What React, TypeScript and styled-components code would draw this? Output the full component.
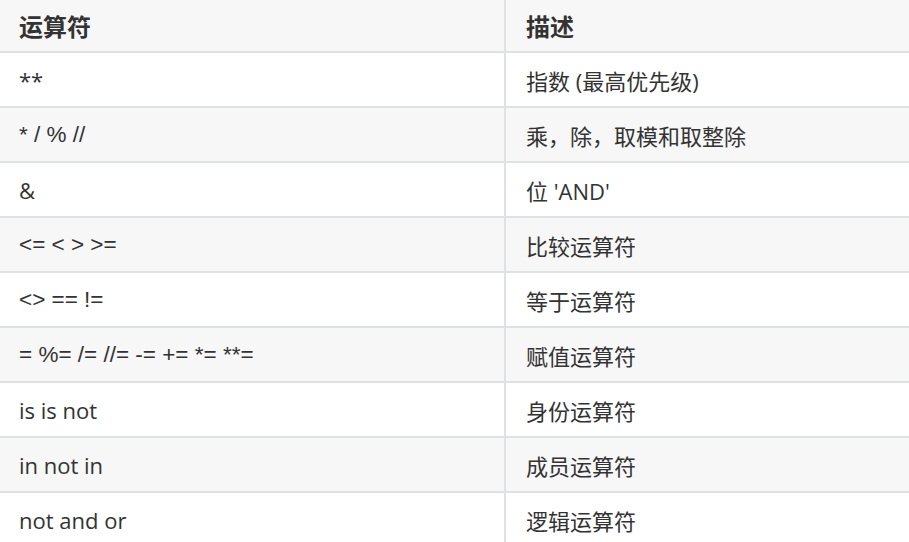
import styled, { createGlobalStyle } from "styled-components";

const GlobalStyle = createGlobalStyle`
	html, body {
		margin: 0;
		padding: 0;
		background: #fff;
	}
	body {
		font-family: "Open Sans", "Noto Sans CJK SC", sans-serif;
		color: #333;
	}
`;

const Table = styled.div`
	display: grid;
	grid-template-columns: 504px 1fr;
	width: 909px;
`;

const Cell = styled.div<{ $mono?: boolean; $right?: boolean; $shade?: boolean; $head?: boolean }>`
	display: flex;
	align-items: center;
	height: ${(p) => (p.$head ? "51px" : "53px")};
	padding: 0 20px 0 ${(p) => (p.$right ? "20px" : "19px")};
	background: ${(p) => (p.$shade ? "#f7f7f7" : "#ffffff")};
	border-bottom: 2px solid #dfe2e5;
	font-size: ${(p) => (p.$head ? "24px" : p.$mono ? "22.5px" : "22px")};
	font-weight: ${(p) => (p.$head ? 700 : 400)};
	font-family: ${(p) =>
		p.$mono
			? '"Liberation Sans", "Noto Sans CJK SC", sans-serif'
			: '"Open Sans", "Noto Sans CJK SC", sans-serif'};
	white-space: nowrap;
	${(p) => p.$right && "border-left: 2px solid #dfe2e5;"}
`;

const rows = [
	{ op: "**", desc: "指数 (最高优先级)" },
	{ op: "* / % //", desc: "乘，除，取模和取整除", alt: true },
	{ op: "&", desc: "位 'AND'" },
	{ op: "<= < > >=", desc: "比较运算符", alt: true },
	{ op: "<> == !=", desc: "等于运算符", alt: true },
	{ op: "= %= /= //= -= += *= **=", desc: "赋值运算符", alt: true },
	{ op: "is is not", desc: "身份运算符" },
	{ op: "in not in", desc: "成员运算符" },
	{ op: "not and or", desc: "逻辑运算符" },
];

export default function App() {
	return (
		<>
			<GlobalStyle />
			<Table>
				<Cell $head $shade>运算符</Cell>
				<Cell $head $shade $right>描述</Cell>
				{rows.map((r, i) => {
					const shade = i % 2 === 1;
					return [
						<Cell key={r.op + "-op"} $mono={r.alt} $shade={shade}>
							{r.op}
						</Cell>,
						<Cell key={r.op + "-desc"} $right $shade={shade}>
							{r.desc}
						</Cell>,
					];
				})}
			</Table>
		</>
	);
}
